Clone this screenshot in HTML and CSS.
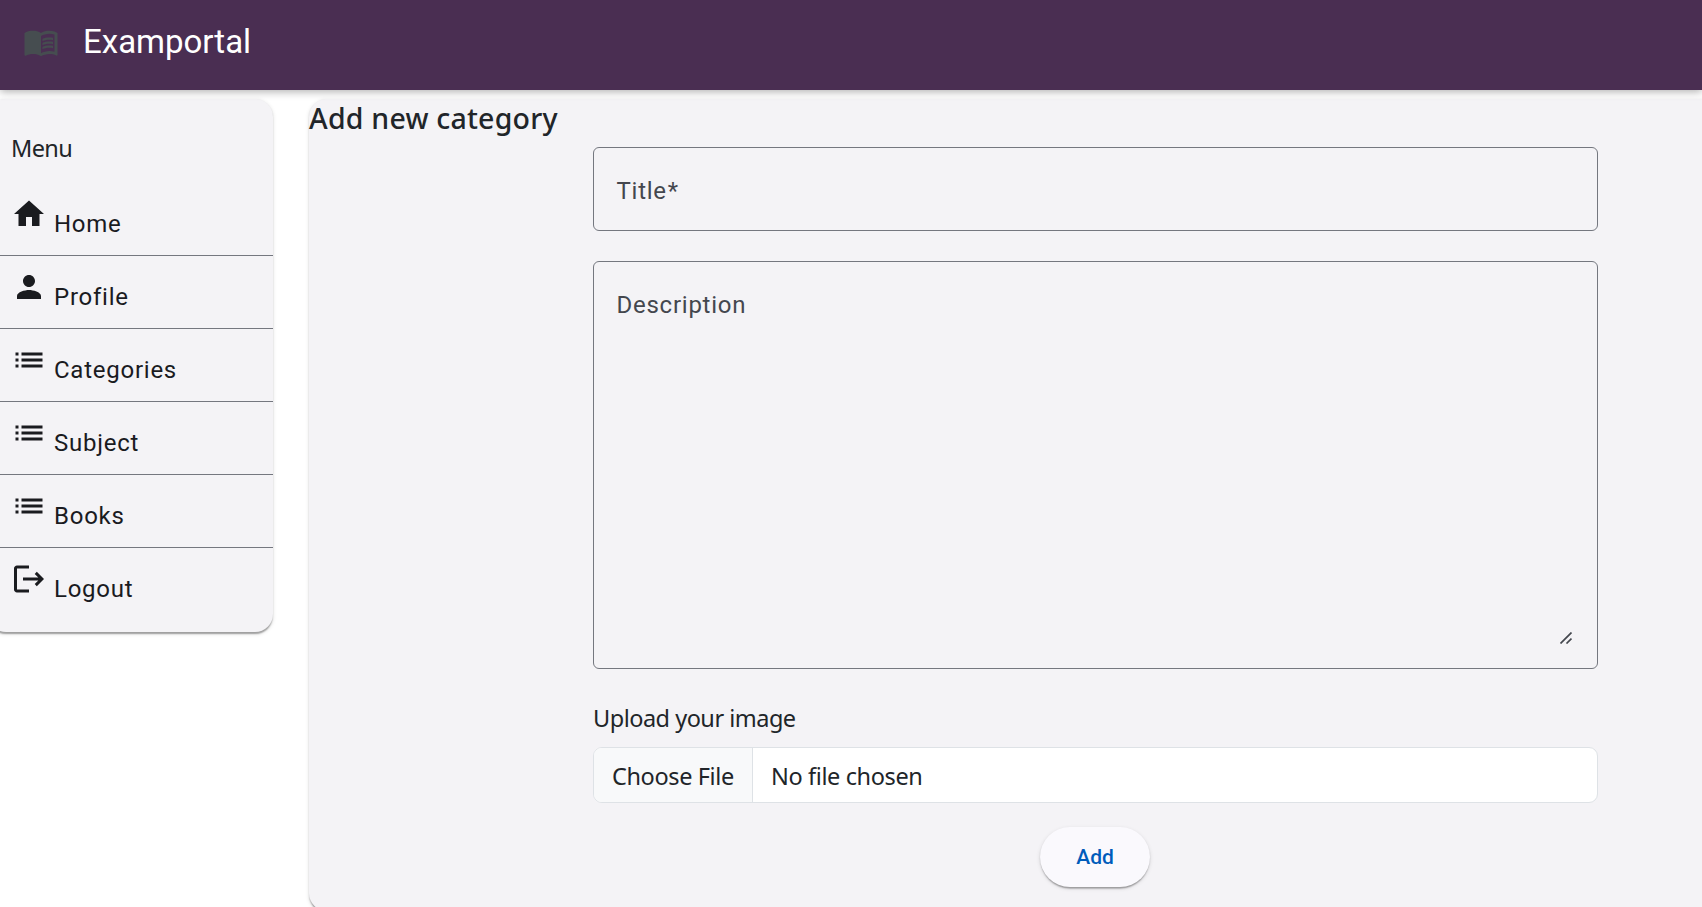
FILE: index.html
```html
<!DOCTYPE html>
<html lang="en">
<head>
<meta charset="utf-8">
<title>Examportal</title>
<link rel="stylesheet" href="styles.css">
</head>
<body>
<header class="toolbar">
  <svg class="icon brand-icon" viewBox="0 0 24 24"><path fill-rule="evenodd" d="M21 5c-1.11-.35-2.33-.5-3.5-.5-1.95 0-4.05.4-5.5 1.5-1.45-1.1-3.55-1.5-5.5-1.5S2.45 4.900 1 6v14.650c0 .25.25.5.5.5.1 0 .15-.05.25-.05C3.100 20.450 5.050 20 6.500 20c1.950 0 4.050.4 5.500 1.500 1.350-.85 3.800-1.500 5.500-1.500 1.650 0 3.350.3 4.750 1.050.1.050.15.050.25.050.25 0 .5-.25.5-.5V6c-.6-.45-1.250-.75-2-1zm0 13.500c-1.100-.35-2.300-.5-3.500-.5-1.700 0-4.150.65-5.500 1.500V8c1.350-.85 3.800-1.500 5.500-1.500 1.200 0 2.400.15 3.500.5v11.500z"/><path d="M17.500 10.500c.88 0 1.730.09 2.500.26V9.240c-.79-.15-1.640-.24-2.500-.24-1.700 0-3.240.29-4.500.83v1.660c1.130-.64 2.700-.99 4.500-.99zM13 12.490v1.660c1.130-.64 2.700-.99 4.500-.99.88 0 1.730.09 2.500.26V11.900c-.79-.15-1.640-.24-2.500-.24-1.700 0-3.240.3-4.500.83zM17.500 14.330c-1.700 0-3.240.29-4.500.83v1.660c1.130-.64 2.700-.99 4.500-.99.88 0 1.730.09 2.500.26v-1.520c-.79-.16-1.640-.24-2.500-.24z"/></svg>
  <span class="brand">Examportal</span>
</header>
<div class="layout">
  <aside class="card sidebar">
    <div class="menu-title">Menu</div>
    <nav class="menu">
      <a class="item"><svg class="icon" viewBox="0 0 24 24"><path d="M10 20v-6h4v6h5v-8h3L12 3 2 12h3v8z"/></svg><span>Home</span></a>
      <a class="item"><svg class="icon" viewBox="0 0 24 24"><path d="M12 12c2.210 0 4-1.790 4-4s-1.790-4-4-4-4 1.790-4 4 1.790 4 4 4zm0 2c-2.670 0-8 1.340-8 4v2h16v-2c0-2.660-5.330-4-8-4z"/></svg><span>Profile</span></a>
      <a class="item"><svg class="icon" viewBox="0 0 24 24"><path d="M3 13h2v-2H3v2zm0 4h2v-2H3v2zm0-8h2V7H3v2zm4 4h14v-2H7v2zm0 4h14v-2H7v2zM7 7v2h14V7H7z"/></svg><span>Categories</span></a>
      <a class="item"><svg class="icon" viewBox="0 0 24 24"><path d="M3 13h2v-2H3v2zm0 4h2v-2H3v2zm0-8h2V7H3v2zm4 4h14v-2H7v2zm0 4h14v-2H7v2zM7 7v2h14V7H7z"/></svg><span>Subject</span></a>
      <a class="item"><svg class="icon" viewBox="0 0 24 24"><path d="M3 13h2v-2H3v2zm0 4h2v-2H3v2zm0-8h2V7H3v2zm4 4h14v-2H7v2zm0 4h14v-2H7v2zM7 7v2h14V7H7z"/></svg><span>Books</span></a>
      <a class="item"><svg class="icon" viewBox="0 0 24 24"><path d="M4 3h8v2H4v14h8v2H4c-1.100 0-2-.9-2-2V5c0-1.100.9-2 2-2zM17.200 7.200L22 12l-4.800 4.800-1.400-1.400 2.400-2.400H8v-2h10.200l-2.400-2.400z"/></svg><span>Logout</span></a>
    </nav>
  </aside>
  <main class="card content">
    <h3 class="heading">Add new category</h3>
    <form class="form">
      <div class="field title-field"><span>Title<span class="required">*</span></span></div>
      <div class="field desc-field"><span>Description</span>
        <svg class="grip" viewBox="0 0 12 12"><path d="M.5 11.500l11-11M6.500 11.500l5-5"/></svg>
      </div>
      <span class="upload-label">Upload your image</span>
      <div class="file"><span class="file-button">Choose File</span><span class="file-name">No file chosen</span></div>
      <button class="add" type="button">Add</button>
    </form>
  </main>
</div>
</body>
</html>
```
FILE: styles.css
```css
* { box-sizing: border-box; }
body {
  margin: 0;
  height: 907px;
  overflow: hidden;
  background: #fff;
  color: #212529;
  font-family: "Noto Sans", sans-serif;
}
.icon { width: 36px; height: 36px; flex: none; fill: currentColor; }
.toolbar {
  position: relative;
  z-index: 1;
  display: flex;
  align-items: center;
  height: 90px;
  padding: 0 0 7px 23px;
  background: #4a2e52;
  box-shadow: 0 2px 8px rgba(0, 0, 0, .3);
}
.brand-icon { color: #464d50; }
.brand {
  margin-left: 24px;
  color: #fff;
  font: 400 33px/48px Roboto, sans-serif;
}
.layout { display: flex; align-items: flex-start; gap: 36px; }
.card {
  background: #f4f3f6;
  border-radius: 18px;
  box-shadow: 0 3px 1.500px -1.500px rgba(0, 0, 0, .2), 0 1.500px 1.500px rgba(0, 0, 0, .14), 0 1.500px 4.500px rgba(0, 0, 0, .12);
}
.sidebar { width: 285px; height: 533px; margin: 9px 0 0 -12px; padding: 29px 0 0 12px; }
.menu-title { height: 55px; padding: 2px 0 0 11px; font-size: 23.500px; line-height: 36px; letter-spacing: -.6px; }
.item {
  display: flex;
  align-items: flex-start;
  gap: 7px;
  height: 73px;
  padding: 12.500px 0 0 11px;
  border-bottom: 1px solid #74777f;
  color: #1a1b1f;
  font: 24px/36px Roboto, sans-serif;
  letter-spacing: .75px;
}
.item:last-child { border-bottom: 0; }
.item span { margin-top: 10px; }
.content { flex: 1; height: 812px; margin: 9px -20px 0 0; }
.heading { margin: 0; padding-top: 1px; font-size: 28.500px; line-height: 36px; font-weight: 500; letter-spacing: .22px; }
.form { display: flex; flex-direction: column; width: 1005px; margin: 11px 0 0 284px; }
.field {
  border: 1px solid #74777f;
  border-radius: 6px;
  padding: 25px 24px 23px 22.500px;
  color: #44474e;
  font: 24px/36px Roboto, sans-serif;
  letter-spacing: .75px;
}
.required { margin-left: 1px; }
.title-field { height: 84px; }
.desc-field { display: flex; justify-content: space-between; height: 408px; margin-top: 30px; }
.grip { width: 12px; height: 12px; margin: 0 1px 1px 0; align-self: flex-end; fill: none; stroke: #44474e; stroke-width: 1.700; }
.upload-label { margin-top: 31px; font-size: 23.500px; line-height: 36px; letter-spacing: -.5px; }
.file {
  display: flex;
  height: 56px;
  margin-top: 11px;
  overflow: hidden;
  border: 1px solid #dee2e6;
  border-radius: 9px;
  background: #fff;
  font-size: 23.500px;
  line-height: 57px;
  letter-spacing: -.38px;
}
.file-button { width: 159px; padding-left: 18px; border-right: 1px solid #dee2e6; background: #f8f9fa; white-space: nowrap; }
.file-name { padding-left: 18px; }
.add {
  align-self: center;
  width: 110px;
  height: 60px;
  margin: 24px 1px 0 0;
  border: 0;
  border-radius: 30px;
  background: #faf9fd;
  color: #005cbb;
  font: 500 21px/30px Roboto, sans-serif;
  box-shadow: 0 3px 1.500px -1.500px rgba(0, 0, 0, .2), 0 1.500px 1.500px rgba(0, 0, 0, .14), 0 1.500px 4.500px rgba(0, 0, 0, .12);
}
```
